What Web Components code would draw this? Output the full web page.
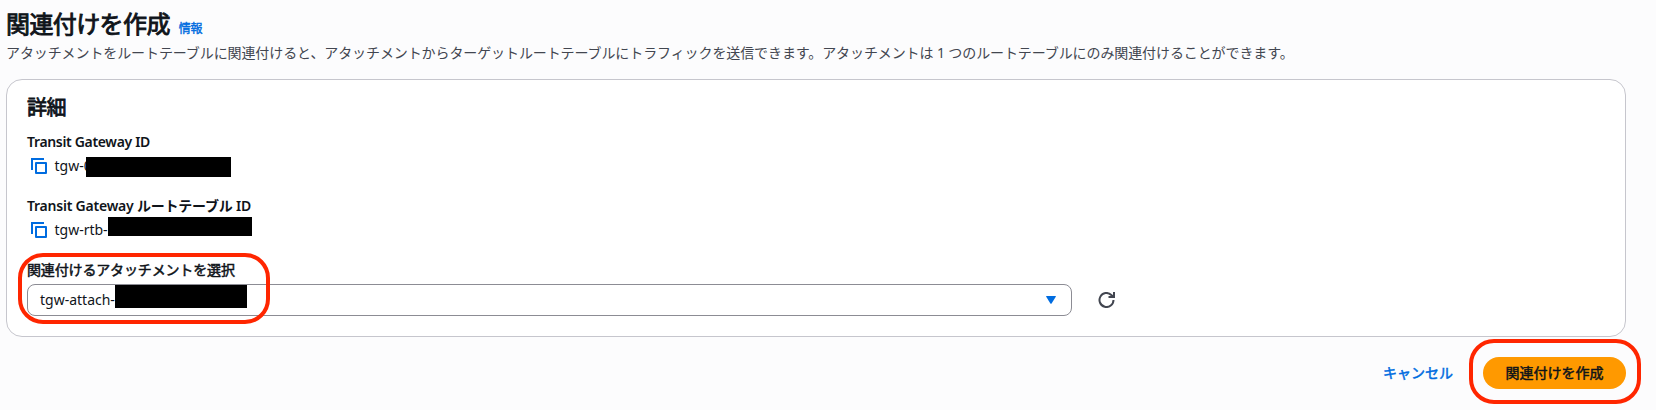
<!DOCTYPE html>
<html lang="ja">
<head>
<meta charset="utf-8">
<title>関連付けを作成</title>
<style>
  body {
    margin: 0;
    background: #fcfcfd;
    color: #0f141a;
    font: 14px/20px "Noto Sans", "Noto Sans CJK JP", sans-serif;
  }
</style>
</head>
<body>
<association-page>
  <page-header slot="header" info="情報" description="アタッチメントをルートテーブルに関連付けると、アタッチメントからターゲットルートテーブルにトラフィックを送信できます。アタッチメントは 1 つのルートテーブルにのみ関連付けることができます。">関連付けを作成</page-header>
  <detail-card heading="詳細">
    <copy-field label="Transit Gateway ID" style="--label-spacing: -0.33px; --mask-x: 59px; --mask-y: 1px; --mask-w: 145px; --mask-h: 20px">tgw-0</copy-field>
    <copy-field label="Transit Gateway ルートテーブル ID" style="--label-spacing: -0.22px; --mask-x: 81px; --mask-y: -3px; --mask-w: 144px; --mask-h: 19px">tgw-rtb-</copy-field>
    <select-field label="関連付けるアタッチメントを選択">tgw-attach-</select-field>
  </detail-card>
  <form-actions slot="actions" cancel="キャンセル">関連付けを作成</form-actions>
</association-page>

<script>
  class AssociationPage extends HTMLElement {
    constructor() {
      super();
      this.attachShadow({ mode: 'open' });
    }

    connectedCallback() {
      this.shadowRoot.innerHTML = `
        <style>
          :host {
            display: flex;
            flex-direction: column;
            box-sizing: border-box;
            height: 410px;
            padding: 9px 30px 0 6px;
          }
        </style>
        <slot name="header"></slot>
        <slot></slot>
        <slot name="actions"></slot>
      `;
    }
  }

  class PageHeader extends HTMLElement {
    constructor() {
      super();
      this.attachShadow({ mode: 'open' });
    }

    connectedCallback() {
      this.shadowRoot.innerHTML = `
        <style>
          :host {
            display: block;
            height: 70px;
            white-space: nowrap;
          }

          .title {
            display: flex;
            align-items: baseline;
            height: 34px;
            gap: 9px;
          }

          h1 {
            margin: 0;
            font-size: 24px;
            line-height: 30px;
            font-weight: 400;
            letter-spacing: -0.6px;
            -webkit-text-stroke: 0.9px;
          }

          a {
            color: #006ce0;
            font-size: 12px;
            line-height: 16px;
            letter-spacing: -0.2px;
            -webkit-text-stroke: 0.4px;
          }

          p {
            margin: 0;
            color: #424650;
            letter-spacing: -0.1px;
          }
        </style>
        <div class="title">
          <h1><slot></slot></h1>
          <a>${this.getAttribute('info')}</a>
        </div>
        <p>${this.getAttribute('description')}</p>
      `;
    }
  }

  class DetailCard extends HTMLElement {
    constructor() {
      super();
      this.attachShadow({ mode: 'open' });
    }

    connectedCallback() {
      this.shadowRoot.innerHTML = `
        <style>
          :host {
            display: block;
            box-sizing: border-box;
            height: 258px;
            padding: 16px 20px 0;
            background: #fff;
            border: 1px solid #c6c6cd;
            border-radius: 16px;
          }

          h2 {
            margin: 0 0 12px;
            font-size: 20px;
            line-height: 24px;
            font-weight: 400;
            letter-spacing: -0.5px;
            -webkit-text-stroke: 0.8px;
          }

          .fields {
            display: flex;
            flex-direction: column;
            gap: 20px;
          }
        </style>
        <h2>${this.getAttribute('heading')}</h2>
        <div class="fields"><slot></slot></div>
      `;
    }
  }

  class CopyField extends HTMLElement {
    constructor() {
      super();
      this.attachShadow({ mode: 'open' });
    }

    connectedCallback() {
      this.shadowRoot.innerHTML = `
        <style>
          :host {
            display: flex;
            flex-direction: column;
            gap: 4px;
          }

          .label {
            font-weight: 600;
            letter-spacing: var(--label-spacing);
          }

          .value {
            position: relative;
            display: flex;
            align-items: center;
            gap: 6.5px;
            padding-left: 4px;
            height: 20px;
          }

          .mask {
            position: absolute;
            left: var(--mask-x);
            top: var(--mask-y);
            width: var(--mask-w);
            height: var(--mask-h);
            background: #000;
          }
        </style>
        <div class="label">${this.getAttribute('label')}</div>
        <div class="value">
          <svg width="17" height="18" viewBox="0 0 17 18" fill="none" stroke="#006ce0" stroke-width="2">
            <path d="M1 13V2h12"/>
            <rect x="5" y="6" width="10" height="10" stroke-linejoin="round"/>
          </svg>
          <span><slot></slot></span>
          <div class="mask"></div>
        </div>
      `;
    }
  }

  class SelectField extends HTMLElement {
    constructor() {
      super();
      this.attachShadow({ mode: 'open' });
    }

    connectedCallback() {
      this.shadowRoot.innerHTML = `
        <style>
          :host {
            display: block;
            position: relative;
          }

          .label {
            margin-bottom: 4px;
            letter-spacing: -0.15px;
            -webkit-text-stroke: 0.5px;
          }

          .row {
            display: flex;
            align-items: center;
            gap: 26px;
          }

          .select {
            display: flex;
            align-items: center;
            justify-content: space-between;
            box-sizing: border-box;
            width: 1045px;
            height: 32px;
            padding: 0 15px 0 12px;
            border: 1px solid #8c8c94;
            border-radius: 8px;
          }

          .mask {
            position: absolute;
            left: 88px;
            top: 25px;
            width: 132px;
            height: 23px;
            background: #000;
          }

          .ring {
            position: absolute;
            left: -9px;
            top: -7px;
            box-sizing: border-box;
            width: 252px;
            height: 71px;
            border: 4px solid #ff2600;
            border-radius: 25px;
          }
        </style>
        <div class="label">${this.getAttribute('label')}</div>
        <div class="row">
          <div class="select">
            <span><slot></slot></span>
            <svg width="10" height="8" viewBox="0 0 10 8">
              <path d="M0.7 0h8.6q.8 0 .5.7L5.6 7.4q-.6.8-1.2 0L.2.7Q-.1 0 .7 0z" fill="#006ce0"/>
            </svg>
          </div>
          <svg width="17" height="16" viewBox="0 0 17 16" fill="none" stroke="#424650" stroke-width="2">
            <path d="M15.5 8a7 7 0 1 1-2.2-5.1L15 4.5"/>
            <path d="M16 0v5h-5.5"/>
          </svg>
        </div>
        <div class="mask"></div>
        <div class="ring"></div>
      `;
    }
  }

  class FormActions extends HTMLElement {
    constructor() {
      super();
      this.attachShadow({ mode: 'open' });
    }

    connectedCallback() {
      this.shadowRoot.innerHTML = `
        <style>
          :host {
            display: flex;
            justify-content: flex-end;
            align-items: center;
            gap: 30px;
            height: 32px;
            margin-top: 20px;
            -webkit-text-stroke: 0.5px;
          }

          a {
            color: #006ce0;
          }

          .primary {
            position: relative;
            width: 143px;
            height: 32px;
            border-radius: 16px;
            background: #ff9900;
            line-height: 32px;
            text-align: center;
          }

          .ring {
            position: absolute;
            left: -14px;
            top: -18px;
            box-sizing: border-box;
            width: 172px;
            height: 65px;
            border: 4px solid #ff2600;
            border-radius: 25px;
          }
        </style>
        <a>${this.getAttribute('cancel')}</a>
        <div class="primary"><slot></slot><div class="ring"></div></div>
      `;
    }
  }

  customElements.define('association-page', AssociationPage);
  customElements.define('page-header', PageHeader);
  customElements.define('detail-card', DetailCard);
  customElements.define('copy-field', CopyField);
  customElements.define('select-field', SelectField);
  customElements.define('form-actions', FormActions);
</script>
</body>
</html>
